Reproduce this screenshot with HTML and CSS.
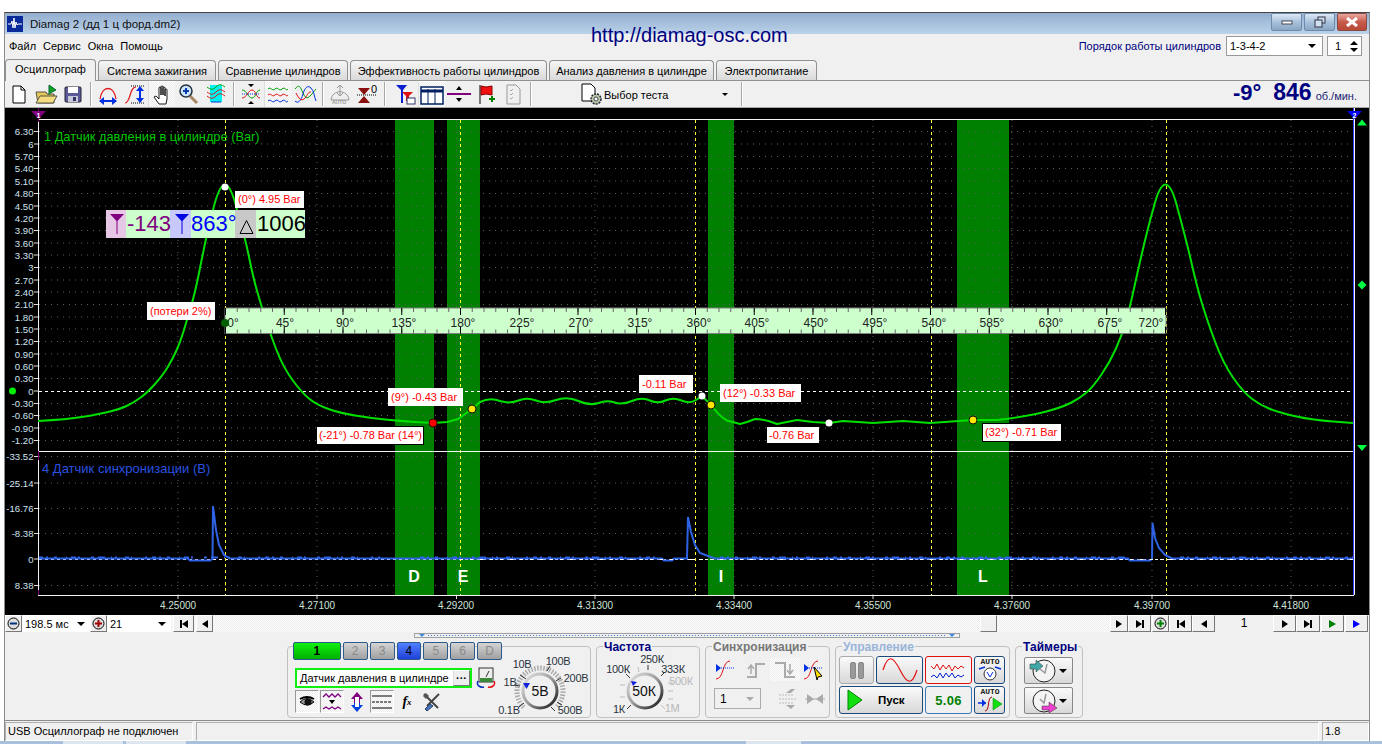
FILE: index.html
```html
<!DOCTYPE html>
<html>
<head>
    <meta charset="UTF-8">
    <title>Diamag 2</title>
    <link rel="stylesheet" href="styles.css">
</head>
<body>
<div class="window">

    <!-- titulo -->
    <div class="titlebar">
        <svg class="app-icon" width="16" height="16" viewBox="0 0 16 16"><rect width="16" height="16" fill="#0a2a9a"/><path d="M1 8h3l1-3 1 7 1-10 1 10 1-6 1 3 1-1h4" stroke="#fff" fill="none"/></svg>
        <span class="title-text">Diamag 2 (дд 1 ц форд.dm2)</span>
        <div class="caption-btns">
            <div class="cap-btn"><svg width="12" height="8"><rect x="1" y="3" width="10" height="3" fill="#fff" stroke="#445"/></svg></div>
            <div class="cap-btn"><svg width="12" height="12"><rect x="4" y="1" width="7" height="6" fill="#cfe0f0" stroke="#334"/><rect x="1" y="4" width="7" height="7" fill="#cfe0f0" stroke="#334"/></svg></div>
            <div class="cap-btn cap-close"><svg width="14" height="10"><path d="M2 1l10 8M12 1L2 9" stroke="#fff" stroke-width="3"/></svg></div>
        </div>
    </div>

    <!-- menu -->
    <div class="menubar">
        <span>Файл</span><span>Сервис</span><span>Окна</span><span>Помощь</span>
        <div class="order">
            <span class="order-label">Порядок работы цилиндров</span>
            <div class="combo combo-order">1-3-4-2<i class="caret"></i></div>
            <div class="combo combo-spin">1<div class="spin"><i class="up"></i><i class="caret"></i></div></div>
        </div>
    </div>
    <a class="site-link">http://diamag-osc.com</a>

    <!-- pestañas -->
    <div class="tabs">
        <div class="tab tab-active">Осциллограф</div>
        <div class="tab tab-ign">Система зажигания</div>
        <div class="tab tab-cmp">Сравнение цилиндров</div>
        <div class="tab tab-eff">Эффективность работы цилиндров</div>
        <div class="tab tab-press">Анализ давления в цилиндре</div>
        <div class="tab tab-pow">Электропитание</div>
    </div>

    <!-- barra de herramientas -->
    <div class="toolbar">
        <div class="tb"><svg width="24" height="22"><path d="M6 3h8l4 4v13H6z" fill="#fff" stroke="#000"/><path d="M14 3v4h4" fill="none" stroke="#000"/></svg></div>
        <div class="tb"><svg width="24" height="22"><path d="M2 9h10l1 2h7v9H4z" fill="#e8c858" stroke="#554"/><path d="M2 20l4-7h17l-4 7z" fill="#f5dc80" stroke="#554"/><path d="M15 12V2l7 5-6 3" fill="#10a020" stroke="#063"/></svg></div>
        <div class="tb"><svg width="24" height="22"><rect x="4" y="4" width="16" height="15" rx="1" fill="#5a5a9a" stroke="#223"/><rect x="7" y="4" width="10" height="6" fill="#fff"/><rect x="7" y="13" width="10" height="6" fill="#c8c8d8"/><rect x="12" y="14" width="3" height="4" fill="#336"/></svg></div>
        <div class="tb-sep"></div>
        <div class="tb"><svg width="24" height="22"><path d="M4 16C6 2 18 2 20 16" fill="none" stroke="#e01010" stroke-width="1.3"/><path d="M4 18h16" stroke="#0030e0" stroke-width="2"/><path d="M3 18l5-4v8zM21 18l-5-4v8z" fill="#0030e0"/></svg></div>
        <div class="tb"><svg width="24" height="22"><path d="M2 20C8 20 6 4 13 4" fill="none" stroke="#e01010" stroke-width="1.2"/><path d="M8 3h13" stroke="#000" stroke-dasharray="1 1"/><path d="M8 20h13" stroke="#000" stroke-dasharray="1 1"/><path d="M17 5v13" stroke="#0030e0" stroke-width="2"/><path d="M17 3l-4 5h8zM17 20l-4-5h8z" fill="#0030e0"/></svg></div>
        <div class="tb tb-on"><svg width="24" height="22"><path d="M9 20l-5-7 2-1 3 3V4a1 1 0 0 1 2 0v7V3a1 1 0 0 1 2 0v8V4a1 1 0 0 1 2 0v8V6a1 1 0 0 1 2 0v9l-1 5z" fill="#fff" stroke="#000" stroke-width=".9"/></svg></div>
        <div class="tb"><svg width="24" height="22"><path d="M13 13l7 7" stroke="#a86" stroke-width="3"/><circle cx="9" cy="8" r="6" fill="#cfe4f8" stroke="#234" stroke-width="1.5"/><path d="M6 8h6M9 5v6" stroke="#0a3ab0" stroke-width="2"/></svg></div>
        <div class="tb"><svg width="24" height="22"><rect x="6" y="2" width="12" height="17" fill="#00f0f0"/><path d="M3 4c4 3 6 3 9 0s5-3 9 0" fill="none" stroke="#00a000"/><path d="M3 9c4 3 6 3 9 0s5-3 9 0M3 13c4 3 6 3 9 0s5-3 9 0" fill="none" stroke="#e01010"/><path d="M7 19h10" stroke="#0030e0"/></svg></div>
        <div class="tb-sep"></div>
        <div class="tb"><svg width="24" height="22"><path d="M3 7c5 0 6 8 10 8s4-8 8-8" fill="none" stroke="#00a000"/><path d="M3 15c5 0 6-8 10-8s4 8 8 8" fill="none" stroke="#e01010"/><path d="M3 11h18" stroke="#0030e0" stroke-dasharray="1 1"/><path d="M12 4l-3-3h6zM12 18l-3 3h6z" fill="#000"/></svg></div>
        <div class="tb tb-on"><svg width="24" height="22"><path d="M2 5c3-3 4 3 7 0s4 3 7 0 4 3 6 0" fill="none" stroke="#00a000"/><path d="M2 11c3-3 4 3 7 0s4 3 7 0 4 3 6 0" fill="none" stroke="#e01010"/><path d="M2 17c3-3 4 3 7 0s4 3 7 0 4 3 6 0" fill="none" stroke="#0030e0"/></svg></div>
        <div class="tb"><svg width="24" height="22"><path d="M2 6c4-5 5-3 8 4s5 5 8 2 3-4 5-6" fill="none" stroke="#00a000"/><path d="M2 18c3 3 6 0 8-7s5-9 8-6 3 8 5 13" fill="none" stroke="#0030e0"/><path d="M3 10c3 6 5 8 8 6s4-8 7-7" fill="none" stroke="#e01010"/></svg></div>
        <div class="tb-sep"></div>
        <div class="tb"><svg width="24" height="22"><path d="M3 17C4 6 20 6 21 17z" fill="#eee" stroke="#999"/><path d="M12 2v11M9 5l3-3 3 3M9 10l3 3 3-3" fill="none" stroke="#999"/><text class="tiny" x="4" y="21">AUTO</text></svg></div>
        <div class="tb"><svg width="24" height="22"><path d="M3 5l6 7 6-7zM3 20l6-7 6 7z" fill="#8a1010"/><path d="M2 12h20" stroke="#000" stroke-dasharray="1 1"/><text class="zero" x="16" y="10">0</text></svg></div>
        <div class="tb-sep tb-sep-wide"></div>
        <div class="tb"><svg width="24" height="22"><path d="M3 2h11L10 7v13H8V7z" fill="#0a20d0"/><path d="M9 9h11l-4 4v5h-3v-5z" fill="#e01010"/><rect x="14" y="15" width="8" height="6" fill="#fff" stroke="#336"/></svg></div>
        <div class="tb tb-on"><svg width="26" height="22"><rect x="2" y="3" width="22" height="17" fill="#fff" stroke="#002060" stroke-width="1.5"/><path d="M2 7h22" stroke="#002060" stroke-width="3"/><path d="M9 5v15M16 5v15" stroke="#002060"/></svg></div>
        <div class="tb"><svg width="24" height="22"><path d="M0 11h24" stroke="#800080" stroke-width="2"/><path d="M12 3l-3 4h6zM12 19l-3-4h6z" fill="#000"/></svg></div>
        <div class="tb"><svg width="24" height="22"><path d="M6 2v19" stroke="#000"/><path d="M7 3l5 1 6-1v9l-6-1-5 1z" fill="#f01010" stroke="#800"/><path d="M15 16h6M18 13v6" stroke="#008000" stroke-width="2"/></svg></div>
        <div class="tb"><svg width="24" height="22"><path d="M6 2h9l4 4v15H6z" fill="#f0f0f0" stroke="#999"/><path d="M9 7l1 1 2-2M9 11l1 1 2-2M9 15l1 1 2-2" fill="none" stroke="#aaa"/></svg></div>
        <div class="tb-sep"></div>
        <div class="test-select">
            <svg width="22" height="22"><path d="M2 1h9l4 4v13H2z" fill="#fff" stroke="#000"/><circle cx="16" cy="16" r="5" fill="#b8c8a8" stroke="#223" stroke-width="1.5" stroke-dasharray="2 1"/><circle cx="16" cy="16" r="2" fill="#fff" stroke="#445"/></svg>
            <span>Выбор теста</span><i class="caret"></i>
        </div>
        <div class="tb-sep tb-sep-last"></div>
        <div class="rpm">
            <b class="rpm-angle">-9°</b><b class="rpm-val">846</b><span>об./мин.</span>
        </div>
    </div>

    <!-- osciloscopio: las coordenadas del viewBox son las de la ventana -->
    <svg class="scope" width="1364" height="507" viewBox="5 108 1364 507">
        <rect x="5" y="108" width="1364" height="507" fill="#000"/>

        <rect class="band" x="395" y="120" width="39" height="475"/>
        <rect class="band" x="447" y="120" width="33" height="475"/>
        <rect class="band" x="708" y="120" width="26" height="475"/>
        <rect class="band" x="957" y="120" width="52" height="475"/>

        <path class="grid" d="M39 131.5H1354M39 144H1354M39 156.5H1354M39 168.5H1354M39 181H1354M39 193.5H1354M39 206H1354M39 218H1354M39 230.5H1354M39 243H1354M39 255H1354M39 267.5H1354M39 280H1354M39 292H1354M39 304.5H1354M39 317H1354M39 329H1354M39 341.5H1354M39 354H1354M39 366H1354M39 378.5H1354M39 403.5H1354M39 415.5H1354M39 428H1354M39 440.5H1354M39 456.5H1354M39 483H1354M39 508.5H1354M39 533.5H1354M39 585.5H1354"/>
        <path class="grid" d="M178 120V595M317 120V595M456.5 120V595M595 120V595M734 120V595M873 120V595M1012 120V595M1152 120V595M1291 120V595"/>
        <path class="ticks" d="M34 131.5h4M34 144h4M34 156.5h4M34 168.5h4M34 181h4M34 193.5h4M34 206h4M34 218h4M34 230.5h4M34 243h4M34 255h4M34 267.5h4M34 280h4M34 292h4M34 304.5h4M34 317h4M34 329h4M34 341.5h4M34 354h4M34 366h4M34 378.5h4M34 391h4M34 403.5h4M34 415.5h4M34 428h4M34 440.5h4M34 456.5h4M34 483h4M34 508.5h4M34 533.5h4M34 559h4M34 585.5h4M178 595v4M317 595v4M456.5 595v4M595 595v4M734 595v4M873 595v4M1012 595v4M1152 595v4M1291 595v4"/>
        <path class="zero-line" d="M39 391.500H1354M39 559.500H1354"/>
        <path class="marker-line" d="M225.500 120V595M460.500 120V595M695.500 120V595M931.500 120V595M1166.500 120V595"/>

        <path class="frame" d="M38.500 119V595.500M38 119.500H1354M38 451.500H1354M38 595.500H1354M1354.500 108V595"/>
        <path class="frame-blue" d="M1353.500 108V595"/>
        <path class="frame-purple" d="M38.500 108V122M38.500 451V460M38.500 590V595"/>

        <path class="trace" d="M38 421Q67 419.500 83.500 416.800Q100 414 110 411.500Q120 409 126.500 406Q133 403 140 398Q147 393 155 384Q163 375 167.500 367.500Q172 360 176 351.500Q180 343 183.500 331.500Q187 320 191 306.500Q195 293 199 273Q203 253 206.500 236.500Q210 220 213 210Q225 160 237 210Q245 237 249 257Q253 277 257.500 292.500Q262 308 266 320.500Q270 333 276.500 350Q283 367 292.500 380Q302 393 309.500 399Q317 405 328.500 409Q340 413 355 415.500Q370 418 385 419.500Q400 421 415 422L433 423L447 422L458 419L472 409L480 402Q490 397 500 401Q510 404 518.500 400.500Q527 397 536 400.500Q545 404 556 400Q567 396 578.500 401Q590 406 598.500 403Q607 400 614.500 402.500Q622 405 632 401Q642 397 650 400.500Q658 404 665.500 400.500Q673 397 681.500 400.500Q690 404 696 400L702 396L711 405Q720 417 727 420.500L740 424Q748 422 755 419Q765 419 777 424Q787 422 797 420L813 422L829 423L843 421L873 423L903 421L930 423L973 420L997 420Q1030 416 1046.500 411.500Q1063 407 1071.500 402.500Q1080 398 1086.500 392.500Q1093 387 1101.500 374.500Q1110 362 1116 348.500Q1122 335 1126 321Q1130 307 1134 288.500Q1138 270 1142.500 251Q1147 232 1151 217L1153 210Q1165.500 159 1178 210Q1187 243 1192 265Q1197 287 1202 303.500Q1207 320 1215 341.500Q1223 363 1233 377.500Q1243 392 1251.500 398.500Q1260 405 1270 409Q1280 413 1296.500 416.500Q1313 420 1333 421.500L1353 423"/>

        <path class="trace-blue" d="M39 558.500H188L190 560.500H210L212.500 559L213 506L216 530L219 545L224 555L230 558.500H662L664 560.500H672L674 558.500H687L688 517L691 532L695 545L700 553L708 556L715 558.500H1128L1130 560.500H1150L1152 559L1152.500 523L1155 538L1159 548L1165 555L1172 558.500H1353"/>
        <path class="trace-noise" d="M39 557.500H380M420 557.500H660M720 557.500H1125M1180 557.500H1353"/>
        <path class="zero-line zero-line-top" d="M460 559.500H1354"/>

        <text class="chan-title chan-green" x="44" y="141">1 Датчик давления в цилиндре (Bar)</text>
        <text class="chan-title chan-blue" x="42" y="473">4 Датчик синхронизации (В)</text>

        <g class="axis-y">
            <text x="33.500" y="135">6.30</text><text x="33.500" y="147.500">6</text><text x="33.500" y="160">5.70</text><text x="33.500" y="172">5.40</text><text x="33.500" y="184.500">5.10</text><text x="33.500" y="197">4.80</text><text x="33.500" y="209.500">4.50</text><text x="33.500" y="221.500">4.20</text><text x="33.500" y="234">3.90</text><text x="33.500" y="246.500">3.60</text><text x="33.500" y="258.500">3.30</text><text x="33.500" y="271">3</text><text x="33.500" y="283.500">2.70</text><text x="33.500" y="295.500">2.40</text><text x="33.500" y="308">2.10</text><text x="33.500" y="320.500">1.80</text><text x="33.500" y="332.500">1.50</text><text x="33.500" y="345">1.20</text><text x="33.500" y="357.500">0.90</text><text x="33.500" y="369.500">0.60</text><text x="33.500" y="382">0.30</text><text x="33.500" y="394.500">0</text><text x="33.500" y="407">-0.30</text><text x="33.500" y="419">-0.60</text><text x="33.500" y="431.500">-0.90</text><text x="33.500" y="444">-1.20</text>
            <text x="33.500" y="460">-33.52</text><text x="33.500" y="486.500">-25.14</text><text x="33.500" y="512">-16.76</text><text x="33.500" y="537">-8.38</text><text x="33.500" y="562.500">0</text><text x="33.500" y="589">8.38</text>
        </g>
        <g class="axis-x">
            <text x="178" y="609">4.25000</text><text x="317" y="609">4.27100</text><text x="456" y="609">4.29200</text><text x="595" y="609">4.31300</text><text x="734" y="609">4.33400</text><text x="873" y="609">4.35500</text><text x="1012" y="609">4.37600</text><text x="1152" y="609">4.39700</text><text x="1291" y="609">4.41800</text>
        </g>

        <g class="band-letters">
            <text x="414" y="582">D</text><text x="463" y="582">E</text><text x="721" y="582">I</text><text x="983" y="582">L</text>
        </g>

        <!-- regla de grados -->
        <rect class="ruler" x="225" y="308" width="941" height="25.500"/>
        <path class="ruler-minor" d="M225 310H1166M225 331.500H1166"/>
        <path class="ruler-major" d="M225 311.500H1166M225 330H1166"/>
        <g class="ruler-text">
            <text x="233" y="327">0°</text><text x="285" y="327">45°</text><text x="345" y="327">90°</text><text x="404" y="327">135°</text><text x="463" y="327">180°</text><text x="522" y="327">225°</text><text x="581" y="327">270°</text><text x="640" y="327">315°</text><text x="699" y="327">360°</text><text x="757" y="327">405°</text><text x="816" y="327">450°</text><text x="875" y="327">495°</text><text x="934" y="327">540°</text><text x="992" y="327">585°</text><text x="1051" y="327">630°</text><text x="1110" y="327">675°</text><text x="1151" y="327">720°</text>
        </g>

        <!-- etiquetas -->
        <rect class="tag" x="235" y="191" width="69" height="17"/><text class="tag-text" x="238" y="203">(0°) 4.95 Bar</text>
        <rect class="tag" x="147" y="302" width="68" height="18"/><text class="tag-text" x="150" y="315">(потери 2%)</text>
        <rect class="tag" x="388" y="388" width="75" height="18"/><text class="tag-text" x="391" y="401">(9°) -0.43 Bar</text>
        <rect class="tag tag-dark" x="316.500" y="426.500" width="107" height="18"/><text class="tag-text" x="319" y="439">(-21°) -0.78 Bar (14°)</text>
        <rect class="tag" x="639" y="375" width="54" height="18"/><text class="tag-text" x="642" y="388">-0.11 Bar</text>
        <rect class="tag" x="720" y="384" width="81" height="18"/><text class="tag-text" x="723" y="397">(12°) -0.33 Bar</text>
        <rect class="tag" x="767" y="427" width="52" height="16"/><text class="tag-text" x="769" y="439">-0.76 Bar</text>
        <rect class="tag tag-dark" x="982.500" y="423.500" width="79" height="18"/><text class="tag-text" x="985" y="436">(32°) -0.71 Bar</text>

        <circle class="dot-w" cx="225" cy="187" r="3.500"/>
        <circle class="dot-g" cx="225" cy="323" r="4"/>
        <circle class="dot-r" cx="433" cy="423" r="4"/>
        <circle class="dot-y" cx="472" cy="409" r="4"/>
        <circle class="dot-w" cx="702" cy="396" r="3.500"/>
        <circle class="dot-y" cx="711" cy="405" r="4"/>
        <circle class="dot-w" cx="829" cy="423" r="3.500"/>
        <circle class="dot-y" cx="973" cy="420" r="4"/>

        <!-- cursores -->
        <path d="M31 111H46L38.500 119z" fill="#800080"/><text class="flag" x="38.500" y="117.500">1</text>
        <path d="M1347 111H1362L1354.500 119z" fill="#0000f0"/><text class="flag" x="1354.500" y="117.500">2</text>
        <path d="M1357 125.500l5-6 5 6zM1357 445l5 6 5-6zM1362 280.500l4.500 4.500-4.500 4.500-4.500-4.500z" fill="#00ff40"/>
        <circle cx="12.500" cy="391" r="3.500" fill="#00f000"/>

        <!-- panel de cursores -->
        <rect class="cur-pur" x="106" y="210" width="20" height="28"/>
        <rect class="cur-grn" x="126" y="210" width="44" height="28"/>
        <rect class="cur-blu" x="170" y="210" width="21" height="28"/>
        <rect class="cur-grn" x="191" y="210" width="44" height="28"/>
        <rect class="cur-gry" x="235" y="210" width="21" height="28"/>
        <rect class="cur-grn" x="256" y="210" width="49" height="28"/>
        <path d="M110 214h14l-6.500 7v13h-1v-13z" fill="#800080"/>
        <path d="M175 214h14l-6.500 7v13h-1v-13z" fill="#0000e0"/>
        <path d="M246.500 220.500l-6.500 13h13z" fill="none" stroke="#000" stroke-width="1"/>
        <text class="cur-text cur-t1" x="127" y="231">-143</text>
        <text class="cur-text cur-t2" x="191" y="231">863°</text>
        <text class="cur-text cur-t3" x="257" y="231">1006</text>
    </svg>

    <!-- navegacion -->
    <div class="navrow">
        <div class="nav-btn nav-round"><svg width="13" height="13"><circle cx="6.500" cy="6.500" r="5.500" fill="#ddd" stroke="#000"/><path d="M3 6.500h7" stroke="#003080" stroke-width="2"/></svg></div>
        <div class="nav-combo nav-combo-time">198.5 мс<i class="caret"></i></div>
        <div class="nav-btn nav-round"><svg width="13" height="13"><circle cx="6.500" cy="6.500" r="5.500" fill="#ddd" stroke="#000"/><path d="M3 6.500h7M6.500 3v7" stroke="#a00000" stroke-width="2"/></svg></div>
        <div class="nav-combo nav-combo-num">21<i class="caret"></i></div>
        <div class="nav-btn nav-w22"><i class="bar"></i><i class="tri-l"></i></div>
        <div class="nav-btn nav-w17"><i class="tri-l"></i></div>
        <div class="track"><div class="thumb"></div></div>
        <div class="nav-btn nav-w18"><i class="tri-r"></i></div>
        <div class="nav-btn nav-w23"><i class="tri-r"></i><i class="bar"></i></div>
        <div class="nav-btn nav-round nav-gap"><svg width="13" height="13"><circle cx="6.500" cy="6.500" r="5.500" fill="#ddd" stroke="#000"/><path d="M3 6.500h7M6.500 3v7" stroke="#008000" stroke-width="2"/></svg></div>
        <div class="nav-btn nav-w23"><i class="bar"></i><i class="tri-l"></i></div>
        <div class="nav-btn nav-w23"><i class="tri-l"></i></div>
        <div class="nav-page">1</div>
        <div class="nav-btn nav-w23"><i class="tri-r"></i></div>
        <div class="nav-btn nav-w24"><i class="tri-r"></i><i class="bar"></i></div>
        <div class="nav-btn nav-w23 nav-gap"><i class="tri-r tri-green"></i></div>
        <div class="nav-btn nav-w23 nav-gap"><i class="tri-r tri-blue"></i></div>
    </div>

    <!-- panel de control -->
    <div class="panel">
        <div class="slider"><i class="slider-tri"></i><i class="slider-dots"></i><i class="slider-tri"></i></div>
        <div class="groups">

            <div class="group group-chan">
                <div class="chan-left">
                    <div class="chan-row">
                        <div class="chan chan-first chan-on-green">1</div>
                        <div class="chan">2</div>
                        <div class="chan">3</div>
                        <div class="chan chan-on-blue">4</div>
                        <div class="chan">5</div>
                        <div class="chan">6</div>
                        <div class="chan">D</div>
                    </div>
                    <div class="sensor-row">
                        <div class="sensor">Датчик давления в цилиндре<span class="dots-btn">···</span></div>
                        <svg width="20" height="22"><rect x="3" y="1" width="14" height="14" fill="#eee" stroke="#333"/><path d="M4 11h12v4H4z" fill="#3a8a3a"/><path d="M10 10l3-6" stroke="#333"/><path d="M2 14c-2 4 2 7 6 6" fill="none" stroke="#0030c0" stroke-width="1.500"/><path d="M18 14c2 4-2 7-6 6" fill="none" stroke="#e01010" stroke-width="1.500"/></svg>
                    </div>
                    <div class="tool-row">
                        <div class="tool tool-on"><svg width="20" height="20"><path d="M3 10q7-7 14 0-7 6-14 0z" fill="#999" stroke="#000"/><circle cx="11" cy="10" r="3.500" fill="#111"/><path d="M3 7q7-4 14 0" fill="none" stroke="#000" stroke-width="2"/></svg></div>
                        <div class="tool tool-on"><svg width="20" height="20"><path d="M1 5l3-3 3 3 3-3 3 3 3-3 3 3" fill="none" stroke="#800080" stroke-width="1.300"/><path d="M1 17l3-2 3 2 3-2 3 2 3-2 3 2" fill="none" stroke="#800080" stroke-width="1.300"/><path d="M7 8h6l-3 4z" fill="#000"/></svg></div>
                        <div class="tool"><svg width="22" height="22"><path d="M11 1l6 7h-3v4H8V8H5z" fill="#800080"/><path d="M11 21l6-7h-3v-2H8v2H5z" fill="#0040e0"/><path d="M9 6h4v10H9z" fill="#fff"/></svg></div>
                        <div class="tool tool-on"><svg width="22" height="20"><path d="M1 4h20M1 16h20" stroke="#000" stroke-width="1.200"/><path d="M1 10h20" stroke="#000" stroke-dasharray="3 1"/></svg></div>
                        <div class="tool tool-fx"><b>f</b><small>x</small></div>
                        <div class="tool"><svg width="22" height="22"><path d="M3 3l14 14" stroke="#444" stroke-width="2"/><path d="M18 3L6 15" stroke="#444" stroke-width="2"/><path d="M9 13l-5 5 2 2 6-5z" fill="#4a70c0" stroke="#246"/><path d="M2 5l3-3 3 3-3 3z" fill="#555"/></svg></div>
                    </div>
                </div>
                <svg class="knob" width="89" height="64" viewBox="502 655 89 64">
                    <path class="knob-hatch" d="M525.700 708.300A23 23 0 1 1 558.300 708.300"/>
                    <path class="knob-tick" d="M528 680l-6-4M549 672l3-5M558 682l5-3M559 703l5 3M553 708l4 4M526 704l-5 4M522 687l-6-1"/>
                    <circle cx="542" cy="692" r="17" fill="#f0f0f0" stroke="url(#ring)" stroke-width="3"/>
                    <path d="M525 684l7 0-3.500 6z" fill="#1020e0"/>
                    <text class="knob-val" x="542" y="697">5В</text>
                    <text class="knob-lab" x="511" y="715" text-anchor="middle">0.1В</text>
                    <text class="knob-lab" x="512" y="687" text-anchor="middle">1В</text>
                    <text class="knob-lab" x="524" y="669" text-anchor="middle">10В</text>
                    <text class="knob-lab" x="560" y="666" text-anchor="middle">100В</text>
                    <text class="knob-lab" x="578" y="683" text-anchor="middle">200В</text>
                    <text class="knob-lab" x="572" y="715" text-anchor="middle">500В</text>
                </svg>
            </div>

            <div class="group group-freq">
                <div class="group-title title-navy">Частота</div>
                <svg class="knob" width="102" height="62" viewBox="597 656 102 62">
                    <defs>
                        <linearGradient id="ring" x1="0" y1="0" x2="1" y2="1"><stop offset="0" stop-color="#e8e8e8"/><stop offset=".5" stop-color="#999"/><stop offset="1" stop-color="#111"/></linearGradient>
                    </defs>
                    <path class="knob-tick" d="M630 679l-4-4M648 671v-5M661 677l4-4"/>
                    <path class="knob-tick knob-tick-off" d="M625 686h-5M625 698h-5M627 670l3 5M638 668l1 5M668 684h5M668 692h5M668 700h5M661 706l4 4"/>
                    <path class="knob-tick" d="M631 706l-4 4"/>
                    <circle cx="645" cy="692" r="17" fill="#f0f0f0" stroke="url(#ring)" stroke-width="3"/>
                    <path d="M631 682l6 1-4 4z" fill="#1020e0"/>
                    <text class="knob-val" x="644" y="697">50К</text>
                    <text class="knob-lab" x="618" y="674" text-anchor="middle">100К</text>
                    <text class="knob-lab" x="652" y="664" text-anchor="middle">250К</text>
                    <text class="knob-lab" x="673" y="674" text-anchor="middle">333К</text>
                    <text class="knob-lab knob-off" x="681" y="686" text-anchor="middle">500К</text>
                    <text class="knob-lab" x="619" y="714" text-anchor="middle">1К</text>
                    <text class="knob-lab knob-off" x="672" y="713" text-anchor="middle">1М</text>
                </svg>
            </div>

            <div class="group group-sync">
                <div class="group-title title-gray">Синхронизация</div>
                <div class="sync-row">
                    <div class="sync"><svg width="24" height="22"><path d="M2 20c8 0 6-18 14-18" fill="none" stroke="#e01010"/><path d="M3 9h17" stroke="#0030e0" stroke-dasharray="1 1"/><path d="M2 5l5 4-5 4z" fill="#0030e0"/></svg></div>
                    <div class="sync"><svg width="24" height="22"><path d="M4 18h9V5h9" fill="none" stroke="#aaa" stroke-width="2"/><path d="M8 15V7M5 10l3-4 3 4" fill="none" stroke="#aaa" stroke-width="1.500"/></svg></div>
                    <div class="sync sync-on"><svg width="24" height="22"><path d="M2 4h10v14h10" fill="none" stroke="#aaa" stroke-width="2"/><path d="M17 5v9M14 11l3 4 3-4" fill="none" stroke="#aaa" stroke-width="1.500"/></svg></div>
                    <div class="sync"><svg width="24" height="22"><path d="M2 20c8 0 6-18 14-18" fill="none" stroke="#e01010"/><path d="M3 9h17" stroke="#0030e0" stroke-dasharray="1 1"/><path d="M2 5l5 4-5 4z" fill="#0030e0"/><path d="M12 8l8 9-4 1-1 3z" fill="#ffe000" stroke="#000"/></svg></div>
                </div>
                <div class="sync-row sync-row-low">
                    <div class="sync-combo">1<i class="caret caret-gray"></i></div>
                    <div class="sync"><svg width="24" height="22"><path d="M2 7h14M2 11h18M2 15h14" stroke="#bbb" stroke-dasharray="2 1"/><path d="M9 5l5-4h4l-4 4zM9 17h9l-4 4z" fill="#aaa"/></svg></div>
                    <div class="sync"><svg width="24" height="22"><path d="M2 11h20" stroke="#aaa"/><path d="M4 6l7 5-7 5zM20 6l-7 5 7 5z" fill="#aaa"/></svg></div>
                </div>
            </div>

            <div class="group group-ctrl">
                <div class="group-title title-blue">Управление</div>
                <div class="ctrl-row">
                    <div class="ctrl ctrl-pause"><i class="pause-bar"></i><i class="pause-bar"></i></div>
                    <div class="ctrl ctrl-sine"><svg width="38" height="24"><path d="M2 12c5-16 10-14 17 0s12 16 17 0" fill="none" stroke="#e01010" stroke-width="1.200"/></svg></div>
                    <div class="ctrl ctrl-wave"><svg width="38" height="24"><path d="M1 8l3 3 3-5 3 6 3-5 3 4 3-4 3 6 3-5 3 3 3-3 3 2" fill="none" stroke="#e01010"/><path d="M1 19l3-2 3 3 3-5 3 5 3-5 3 4 3-4 3 5 3-3 3 2 3-2" fill="none" stroke="#0020d0"/></svg></div>
                    <div class="ctrl ctrl-auto"><svg width="28" height="26"><text class="auto-txt" x="14" y="7">AUTO</text><circle cx="14" cy="17" r="6" fill="#fff" stroke="#333"/><path d="M11 15l3 5 3-5" fill="none" stroke="#0030e0"/><path d="M3 12l6-2M25 12l-6-2" stroke="#0030e0" stroke-width="1.500"/></svg></div>
                </div>
                <div class="ctrl-row ctrl-row-low">
                    <div class="ctrl ctrl-start"><svg width="18" height="24"><path d="M3 2l14 10L3 22z" fill="#10e010" stroke="#008000"/></svg><b>Пуск</b></div>
                    <div class="ctrl ctrl-val">5.06</div>
                    <div class="ctrl ctrl-auto"><svg width="28" height="26"><text class="auto-txt" x="14" y="7">AUTO</text><path d="M2 16h8" stroke="#0030e0" stroke-width="1.500"/><path d="M6 12l4 4-4 4z" fill="#0030e0"/><path d="M9 24c5 0 2-14 7-14" fill="none" stroke="#a00000"/><path d="M17 11l9 6-9 6z" fill="#10e010" stroke="#008000" stroke-width=".5"/></svg></div>
                </div>
            </div>

            <div class="group group-time">
                <div class="group-title title-navy">Таймеры</div>
                <div class="timer"><svg width="30" height="26"><circle cx="15" cy="13" r="11" fill="#f4f4f4" stroke="#222"/><path d="M18 6l-2 9-5-4" fill="none" stroke="#999" stroke-width="1.500"/><path d="M1 6h6V2l7 6-7 6v-3H1z" fill="#40a8a8" stroke="#333" stroke-width=".5"/></svg><i class="caret"></i></div>
                <div class="timer timer-low"><svg width="30" height="26"><circle cx="15" cy="13" r="11" fill="#f4f4f4" stroke="#222"/><path d="M17 6l-2 9-4-4" fill="none" stroke="#999" stroke-width="1.500"/><path d="M13 18h7v-4l8 6-8 5v-3h-7z" fill="#f040d0" stroke="#333" stroke-width=".5"/></svg><i class="caret"></i></div>
            </div>
        </div>
    </div>

    <div class="statusbar">
        <div class="st st-usb">USB Осциллограф не подключен</div>
        <div class="st st-mid"></div>
        <div class="st st-ver">1.8</div>
    </div>
</div>
<div class="taskbar"><i class="task"></i><i class="task"></i><i class="task task-far"></i></div>
</body>
</html>
```

FILE: styles.css
```css
html, body {
    margin: 0;
    padding: 0;
    height: 744px;
    overflow: hidden;
    background-color: #fff;
}

body {
    font-family: "Liberation Sans", Arial, sans-serif;
    font-size: 11px;
    color: #000;
    position: relative;
}

svg {
    display: block;
}

i {
    display: block;
}

.window {
    margin: 12px 0 0 4px;
    width: 1364px;
    border-top: 1px solid #444;
    border-left: 1px solid #8c8c8c;
    border-right: 1px solid #8c8c8c;
    background-color: #f0f0f0;
}

/* titulo */
.titlebar {
    height: 21px;
    display: flex;
    align-items: center;
    padding-left: 2px;
    background: linear-gradient(to bottom, #94aecd, #bad2ea);
}

.app-icon {
    margin-right: 7px;
}

.title-text {
    font-size: 11.5px;
    color: #111;
}

.caption-btns {
    margin-left: auto;
    margin-right: 2px;
    margin-top: -4px;
    display: flex;
    gap: 2px;
}

.cap-btn {
    width: 29px;
    height: 16px;
    border: 1px solid #6f8bab;
    border-radius: 2px;
    background: linear-gradient(to bottom, #dce8f4, #a9c2dc 50%, #8aa6c4);
    display: flex;
    align-items: center;
    justify-content: center;
}

.cap-close {
    width: 28px;
    background: linear-gradient(to bottom, #e8a8a0, #c85a4c 50%, #b84838);
    border-color: #8a4a44;
}

/* menu */
.menubar {
    height: 24px;
    display: flex;
    align-items: center;
    gap: 7px;
    padding-left: 4px;
}

.order {
    margin-left: auto;
    margin-right: 7px;
    display: flex;
    align-items: center;
    gap: 4px;
}

.order-label {
    color: #000080;
    margin-right: 1px;
}

.combo {
    height: 18px;
    background-color: #fff;
    border: 1px solid #999;
    display: flex;
    align-items: center;
    padding-left: 3px;
    font-size: 11px;
}

.combo-order {
    width: 92px;
}

.combo-spin {
    padding-left: 7px;
    width: 26px;
}

.caret {
    width: 0;
    height: 0;
    margin-left: auto;
    margin-right: 6px;
    border-left: 4px solid transparent;
    border-right: 4px solid transparent;
    border-top: 4px solid #000;
}

.spin {
    margin-left: auto;
    margin-right: 3px;
    display: flex;
    flex-direction: column;
    gap: 3px;
}

.spin .caret {
    margin: 0;
}

.spin .up {
    width: 0;
    height: 0;
    border-left: 4px solid transparent;
    border-right: 4px solid transparent;
    border-bottom: 4px solid #000;
}

.site-link {
    position: absolute;
    left: 591px;
    top: 24px;
    font-size: 20px;
    line-height: 23px;
    color: #000080;
}

/* pestañas */
.tabs {
    height: 22px;
    display: flex;
    align-items: flex-end;
    gap: 2px;
    box-sizing: border-box;
}

.tab {
    height: 20px;
    box-sizing: border-box;
    border: 1px solid #919191;
    border-bottom: none;
    border-radius: 4px 4px 0 0;
    background: linear-gradient(to bottom, #f6f6f6, #d9d9d9);
    display: flex;
    align-items: center;
    justify-content: center;
}

.tab-active {
    height: 22px;
    width: 91px;
    background: #f0f0f0;
    padding-bottom: 4px;
    position: relative;
    z-index: 1;
    margin-bottom: -1px;
}

.tab-ign { width: 118px; }
.tab-cmp { width: 130px; }
.tab-eff { width: 197px; }
.tab-press { width: 165px; }
.tab-pow { width: 101px; }

/* barra de herramientas */
.toolbar {
    height: 28px;
    box-sizing: border-box;
    border-top: 1px solid #919191;
    border-bottom: 1px solid #a8a8a8;
    display: flex;
    align-items: center;
}

.tb {
    width: 27px;
    height: 26px;
    display: flex;
    align-items: center;
    justify-content: center;
    box-sizing: border-box;
}

.tb-on {
    background: repeating-conic-gradient(#fff 0 25%, #ebebeb 0 50%) 0 0 / 2px 2px;
    border-top: 1px solid #fff;
    border-left: 1px solid #ddd;
}

.tb-sep {
    width: 1px;
    height: 24px;
    background-color: #a8a8a8;
    border-right: 1px solid #fff;
    margin: 0 2px 0 4px;
}

.tb-sep-wide {
    margin: 0 5px 0 4px;
}

.tb-sep-last {
    margin: 0;
}

.test-select {
    width: 207px;
    height: 26px;
    display: flex;
    align-items: center;
    padding-left: 46px;
    box-sizing: border-box;
    font-size: 11px;
}

.test-select span {
    margin-left: 2px;
    padding-top: 1px;
}

.test-select .caret {
    margin-right: 13px;
    border-left-width: 3px;
    border-right-width: 3px;
    border-top-width: 3px;
}

.tiny {
    font-size: 5px;
    font-weight: bold;
    fill: #999;
}

.zero {
    font-size: 11px;
    fill: #000;
}

.rpm {
    margin-left: auto;
    margin-right: 12px;
    color: #000080;
    display: flex;
    align-items: baseline;
    line-height: 26px;
}

.rpm-angle {
    font-size: 22px;
    margin-right: 12px;
}

.rpm-val {
    font-size: 23px;
    margin-right: 4px;
}

.rpm span {
    font-size: 11px;
    color: #1a1a70;
}

/* osciloscopio */
.scope text {
    font-family: "Liberation Sans", Arial, sans-serif;
}

.band { fill: #008000; }

.grid {
    stroke: #5e5e5e;
    stroke-width: 1;
    stroke-dasharray: 1 5;
    fill: none;
}

.ticks { stroke: #ddd; fill: none; }

.zero-line {
    stroke: #fff;
    stroke-width: 1;
    stroke-dasharray: 3 3;
    fill: none;
}

.zero-line-top {
    stroke-dasharray: 3 7;
}

.marker-line {
    stroke: #ffff30;
    stroke-width: 1;
    stroke-dasharray: 3 3;
    fill: none;
}

.frame { stroke: #f4f4f4; stroke-width: 1; fill: none; }
.frame-blue { stroke: #3040ff; stroke-width: 1; fill: none; }
.frame-purple { stroke: #800080; stroke-width: 1; fill: none; }

.trace {
    stroke: #00e000;
    stroke-width: 2;
    fill: none;
    stroke-linejoin: round;
}

.trace-blue {
    stroke: #2e63e6;
    stroke-width: 2;
    fill: none;
}

.trace-noise {
    stroke: #2e63e6;
    stroke-width: 2;
    fill: none;
    stroke-dasharray: 4 3 2 6 3 9 1 4 5 2 2 11 3 4 7 6 1 3 2 8 4 2 1 13 2 5;
}

.chan-green { font-size: 12.8px; fill: #00c800; }
.chan-blue { font-size: 13px; fill: #2a52e0; }

.axis-y text {
    font-size: 9.6px;
    fill: #cfe4f0;
    text-anchor: end;
}

.axis-x text {
    font-size: 10px;
    fill: #cfe4d8;
    text-anchor: middle;
}

.band-letters text {
    font-size: 16px;
    font-weight: bold;
    fill: #fff;
    text-anchor: middle;
}

.ruler {
    fill: #ccffcc;
    stroke: #808080;
    stroke-width: 1;
}

.ruler-minor {
    stroke: #666;
    stroke-width: 4;
    stroke-dasharray: 1 10.75;
    fill: none;
}

.ruler-major {
    stroke: #000;
    stroke-width: 7;
    stroke-dasharray: 1 57.75;
    fill: none;
}

.ruler-text text {
    font-size: 12px;
    fill: #222;
    text-anchor: middle;
}

.tag { fill: #fff; }
.tag-dark { stroke: #000; stroke-width: 1; }

.tag-text {
    font-size: 11px;
    fill: #ff0000;
}

.dot-w { fill: #fff; }
.dot-g { fill: #006000; }
.dot-r { fill: #ff0000; stroke: #400; stroke-width: 1; }
.dot-y { fill: #ffe800; stroke: #111; stroke-width: 1; }

.flag {
    font-size: 7px;
    font-weight: bold;
    fill: #fff;
    text-anchor: middle;
}

.cur-pur { fill: #e6c8e6; }
.cur-grn { fill: #ccffcc; }
.cur-blu { fill: #c8c8fa; }
.cur-gry { fill: #c8c8c8; }

.cur-text { font-size: 22px; }
.cur-t1 { fill: #800080; }
.cur-t2 { fill: #0000ff; }
.cur-t3 { fill: #000; }

/* navegacion */
.navrow {
    height: 17px;
    display: flex;
    align-items: stretch;
    background: repeating-conic-gradient(#fff 0 25%, #ececec 0 50%) 0 0 / 2px 2px;
}

.nav-btn {
    box-sizing: border-box;
    border: 1px solid;
    border-color: #fff #777 #777 #fff;
    background-color: #f0f0f0;
    display: flex;
    align-items: center;
    justify-content: center;
}

.nav-round { width: 17px; }
.nav-w17 { width: 17px; }
.nav-w18 { width: 18px; }
.nav-w22 { width: 21px; margin-left: 2px; margin-right: 2px; }
.nav-w23 { width: 23px; }
.nav-w24 { width: 24px; }
.nav-gap { margin-left: 1px; }

.nav-combo {
    background-color: #fff;
    display: flex;
    align-items: center;
    padding-left: 3px;
    box-sizing: border-box;
    font-size: 11px;
}

.nav-combo-time { width: 68px; }
.nav-combo-num { width: 64px; }

.nav-combo .caret {
    margin-right: 5px;
}

.bar {
    width: 2px;
    height: 8px;
    background-color: #000;
}

.tri-l, .tri-r {
    width: 0;
    height: 0;
    border-top: 4px solid transparent;
    border-bottom: 4px solid transparent;
}

.tri-l { border-right: 6px solid #000; }
.tri-r { border-left: 6px solid #000; }
.tri-green { border-left: 7px solid #008000; }
.tri-blue { border-left: 7px solid #0000ff; }

.track {
    width: 897px;
}

.thumb {
    width: 17px;
    height: 17px;
    box-sizing: border-box;
    margin-left: 767px;
    border: 1px solid;
    border-color: #fff #777 #777 #fff;
    background-color: #f0f0f0;
}

.nav-page {
    width: 58px;
    background-color: #f0f0f0;
    font-size: 12px;
    line-height: 17px;
    text-align: center;
}

/* panel de control */
.panel {
    height: 89px;
    box-sizing: border-box;
    border-bottom: 1px solid #8c8c8c;
    padding-top: 1px;
}

.slider {
    width: 546px;
    height: 5px;
    margin-left: 409px;
    box-sizing: border-box;
    border: 1px solid #a0a0a0;
    display: flex;
    align-items: center;
    padding: 0 4px;
    gap: 3px;
}

.slider-tri {
    width: 0;
    height: 0;
    border-left: 3px solid transparent;
    border-right: 3px solid transparent;
    border-top: 3px solid #3a8ae8;
}

.slider-dots {
    flex: 1;
    height: 1px;
    background: repeating-linear-gradient(to right, #3a7ad8 0 1px, transparent 1px 3px);
}

.groups {
    margin-top: 8px;
    padding-left: 282px;
    display: flex;
    align-items: flex-start;
}

.group {
    height: 72px;
    box-sizing: border-box;
    border: 1px solid #c0c0c0;
    border-radius: 4px;
}

.group-title {
    width: fit-content;
    margin-top: -8px;
    margin-left: 6px;
    padding: 0 1px;
    height: 16px;
    line-height: 16px;
    font-size: 12px;
    font-weight: bold;
    background-color: #f0f0f0;
}

.title-navy { color: #000080; }
.title-gray { color: #777; }
.title-blue { color: #9ab4d8; }

.group-chan {
    width: 304px;
    display: flex;
    margin-right: 5px;
}

.chan-left {
    width: 214px;
    margin-top: -5px;
    padding-left: 5px;
    box-sizing: border-box;
}

.chan-row {
    display: flex;
    gap: 2px;
    height: 18px;
}

.chan {
    width: 25px;
    box-sizing: border-box;
    border: 1px solid #2a5a8a;
    border-radius: 2px;
    background: linear-gradient(to bottom, #d4d4d4, #a0a0a0);
    color: #8a8a8a;
    font-size: 12px;
    line-height: 16px;
    text-align: center;
}

.chan-first {
    width: 48px;
}

.chan-on-green {
    background: linear-gradient(to bottom, #10f010, #00b000);
    color: #000;
    font-weight: bold;
}

.chan-on-blue {
    background: linear-gradient(to bottom, #5080ff, #2040d8);
    color: #000;
}

.sensor-row {
    margin-top: 7px;
    margin-left: 2px;
    display: flex;
    align-items: center;
    gap: 4px;
}

.sensor {
    width: 177px;
    height: 20px;
    box-sizing: border-box;
    border: 2px solid #10f010;
    background-color: #fff;
    display: flex;
    align-items: center;
    padding-left: 3px;
    font-size: 11px;
    white-space: nowrap;
}

.dots-btn {
    margin-left: auto;
    width: 17px;
    height: 16px;
    box-sizing: border-box;
    border: 1px solid;
    border-color: #fff #777 #777 #ddd;
    background-color: #eee;
    text-align: center;
    line-height: 14px;
    font-weight: bold;
}

.tool-row {
    display: flex;
    align-items: center;
    margin-top: 1px;
    margin-left: 2px;
    gap: 1px;
}

.tool {
    width: 24px;
    height: 23px;
    display: flex;
    align-items: center;
    justify-content: center;
    box-sizing: border-box;
}

.tool-on {
    background: repeating-conic-gradient(#fff 0 25%, #ebebeb 0 50%) 0 0 / 2px 2px;
    border: 1px solid;
    border-color: #999 #fff #fff #999;
}

.tool-fx {
    font-family: "Liberation Serif", serif;
    font-style: italic;
    font-size: 14px;
}

.tool-fx small {
    font-size: 9px;
    font-weight: bold;
}

.knob {
    flex: none;
    overflow: visible;
}

.group-chan .knob {
    margin-top: 7px;
    margin-left: -2px;
}

.knob-hatch {
    fill: none;
    stroke: #aaa;
    stroke-width: 5;
    stroke-dasharray: 1.5 1.5;
}

.knob-tick {
    stroke: #333;
    stroke-width: 1;
    fill: none;
}

.knob-tick-off {
    stroke: #bbb;
}

.knob-val {
    font-size: 14px;
    text-anchor: middle;
    fill: #111;
}

.knob-lab {
    font-size: 11px;
    fill: #2a3440;
    letter-spacing: -0.3px;
}

.knob-off {
    fill: #b8b8b8;
}

.group-freq {
    width: 104px;
    margin-right: 5px;
}

.group-sync {
    width: 125px;
    margin-right: 5px;
}

.sync-row {
    display: flex;
    padding-left: 5px;
    margin-top: 3px;
    align-items: center;
}

.sync-row-low {
    margin-top: 6px;
    padding-left: 8px;
}

.sync {
    width: 30px;
    height: 23px;
    display: flex;
    align-items: center;
    justify-content: center;
}

.sync-row-low .sync {
    width: 26px;
}

.sync-on {
    background: repeating-conic-gradient(#fff 0 25%, #ebebeb 0 50%) 0 0 / 2px 2px;
}

.sync-combo {
    width: 47px;
    height: 21px;
    box-sizing: border-box;
    border: 1px solid #aaa;
    display: flex;
    align-items: center;
    padding-left: 5px;
    margin-right: 15px;
    font-size: 12px;
}

.caret-gray {
    border-top-color: #aaa;
}

.group-ctrl {
    width: 175px;
    margin-right: 5px;
}

.ctrl-row {
    display: flex;
    gap: 2px;
    padding-left: 3px;
    margin-top: 1px;
}

.ctrl-row-low {
    margin-top: 2px;
}

.ctrl {
    height: 28px;
    box-sizing: border-box;
    border: 1px solid #1a4a7a;
    border-radius: 3px;
    background: linear-gradient(to bottom, #fafafa, #d8d8d8);
    display: flex;
    align-items: center;
    justify-content: center;
}

.ctrl-pause {
    width: 35px;
    border-color: #aaa;
    gap: 2px;
}

.pause-bar {
    width: 4px;
    height: 15px;
    border-radius: 2px;
    background-color: #999;
    border: 1px solid #888;
}

.ctrl-sine { width: 47px; }

.ctrl-wave {
    width: 47px;
    border-color: #e01010;
    background: #f4f4f4;
}

.ctrl-auto { width: 31px; }

.auto-txt {
    font-family: "Liberation Mono", monospace;
    font-size: 8px;
    font-weight: bold;
    text-anchor: middle;
    fill: #222;
}

.ctrl-start {
    width: 84px;
    justify-content: flex-start;
    padding-left: 5px;
}

.ctrl-start b {
    margin-left: 15px;
    font-size: 11.5px;
}

.ctrl-val {
    width: 47px;
    background: #f0f0f0;
    border-color: #3a7ab8;
    color: #008000;
    font-weight: bold;
    font-size: 13px;
    letter-spacing: 0.3px;
}

.group-time {
    width: 68px;
}

.timer {
    width: 49px;
    height: 27px;
    margin: 2px 0 0 8px;
    box-sizing: border-box;
    border: 1px solid #888;
    border-radius: 2px;
    background: linear-gradient(to bottom, #fafafa, #d8d8d8);
    display: flex;
    align-items: center;
    padding-left: 4px;
}

.timer-low {
    margin-top: 3px;
}

.timer .caret {
    margin-right: 5px;
}

/* estado */
.statusbar {
    height: 19px;
    margin-top: 1px;
    display: flex;
    gap: 3px;
}

.st {
    box-sizing: border-box;
    border: 1px solid;
    border-color: #b0b0b0 #fff #fff #b0b0b0;
    line-height: 17px;
    font-size: 11px;
    padding-left: 2px;
}

.st-usb { width: 188px; }
.st-mid { width: 1123px; }
.st-ver { width: 47px; }

.taskbar {
    position: absolute;
    left: 0;
    right: 0;
    top: 741px;
    height: 3px;
    background-color: #a8c0dc;
    display: flex;
    padding-left: 63px;
    gap: 3px;
}

.task {
    width: 60px;
    height: 3px;
    background-color: #dde6f0;
}

.task-far {
    margin-left: 557px;
    width: 55px;
}
```
